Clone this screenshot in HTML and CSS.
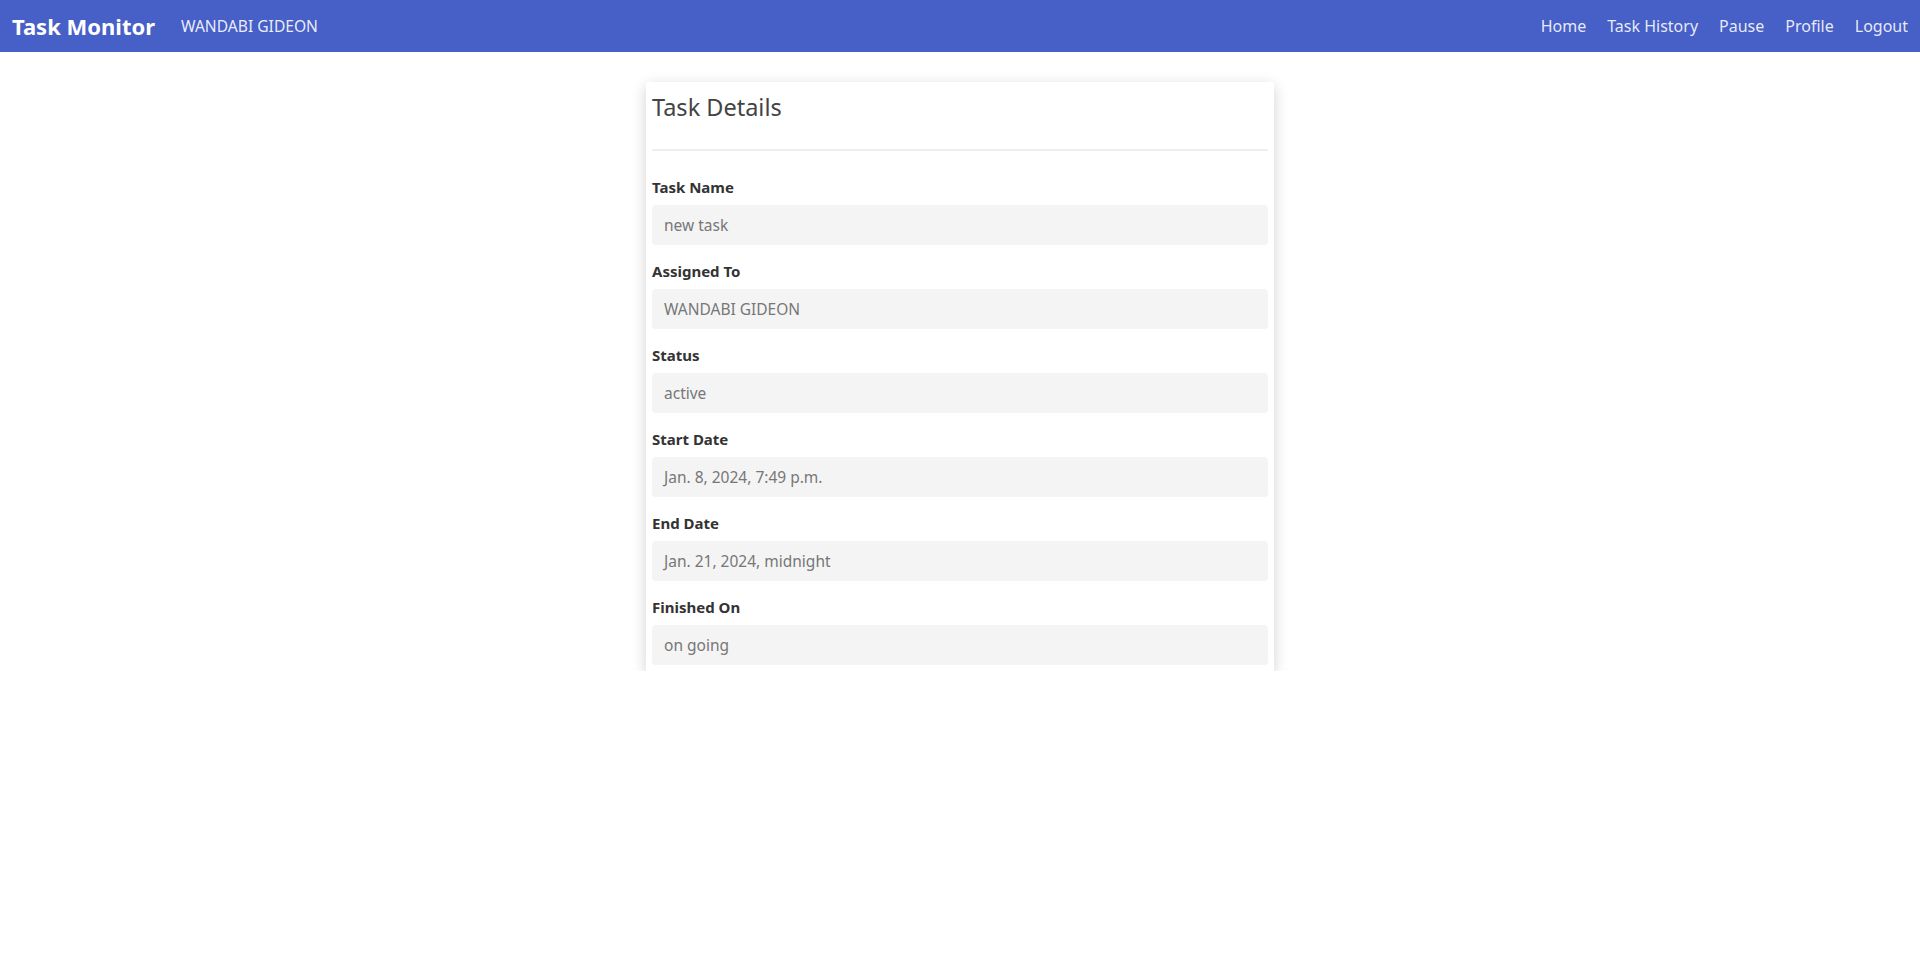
FILE: index.html
```html
<!DOCTYPE html>
<html lang="en">
<head>
<meta charset="utf-8">
<title>Task Monitor</title>
<link rel="stylesheet" href="styles.css">
</head>
<body>
<nav class="navbar">
  <div class="nav-left">
    <a class="brand" href="#">Task Monitor</a>
    <span class="user">WANDABI GIDEON</span>
  </div>
  <ul class="nav-links">
    <li><a href="#">Home</a></li>
    <li><a href="#">Task History</a></li>
    <li><a href="#">Pause</a></li>
    <li><a href="#">Profile</a></li>
    <li><a href="#">Logout</a></li>
  </ul>
</nav>
<main class="page">
  <section class="card">
    <h3 class="card-title">Task Details</h3>
    <hr class="divider">
    <div class="field">
      <label>Task Name</label>
      <div class="value">new task</div>
    </div>
    <div class="field">
      <label>Assigned To</label>
      <div class="value">WANDABI GIDEON</div>
    </div>
    <div class="field">
      <label>Status</label>
      <div class="value">active</div>
    </div>
    <div class="field">
      <label>Start Date</label>
      <div class="value">Jan. 8, 2024, 7:49 p.m.</div>
    </div>
    <div class="field">
      <label>End Date</label>
      <div class="value">Jan. 21, 2024, midnight</div>
    </div>
    <div class="field">
      <label>Finished On</label>
      <div class="value">on going</div>
    </div>
  </section>
</main>
</body>
</html>
```
FILE: styles.css
```css
* { box-sizing: border-box; }
html, body { margin: 0; padding: 0; }
body {
  font-family: "Noto Sans", "Open Sans", sans-serif;
  font-size: 16px;
  color: #212529;
  background: #fff;
}
a { text-decoration: none; }

.navbar {
  height: 52px;
  background: #4760c8;
  display: flex;
  align-items: center;
  justify-content: space-between;
  padding: 0 12px;
}
.nav-left { display: flex; align-items: center; gap: 26px; }
.brand {
  color: #fff;
  font-weight: 700;
  font-size: 22px;
}
.user { color: rgba(255,255,255,0.9); font-size: 15.6px; }
.nav-links {
  list-style: none;
  margin: 0;
  padding: 0;
  display: flex;
  gap: 21px;
}
.nav-links a { color: rgba(255,255,255,0.88); font-size: 16px; }

.page { display: flex; justify-content: center; padding-top: 30px; }
.card {
  width: 628px;
  background: #fff;
  padding: 6px 6px 6px;
  box-shadow: 0 4px 14px rgba(0,0,0,0.18);
}
.card-title {
  margin: 5px 0 0;
  font-size: 23.5px;
  font-weight: 400;
  line-height: 29px;
  color: #444;
}
.divider {
  border: 0;
  border-top: 2px solid #eee;
  margin: 27px 0 26px;
}
.field + .field { margin-top: 16px; }
.field label {
  display: block;
  font-weight: 700;
  font-size: 15px;
  line-height: 20px;
  color: #333;
  margin-bottom: 8px;
}
.value {
  height: 40px;
  background: #f4f4f4;
  border-radius: 4px;
  padding: 0 12px;
  display: flex;
  align-items: center;
  color: #777;
  font-size: 15.5px;
}
```
